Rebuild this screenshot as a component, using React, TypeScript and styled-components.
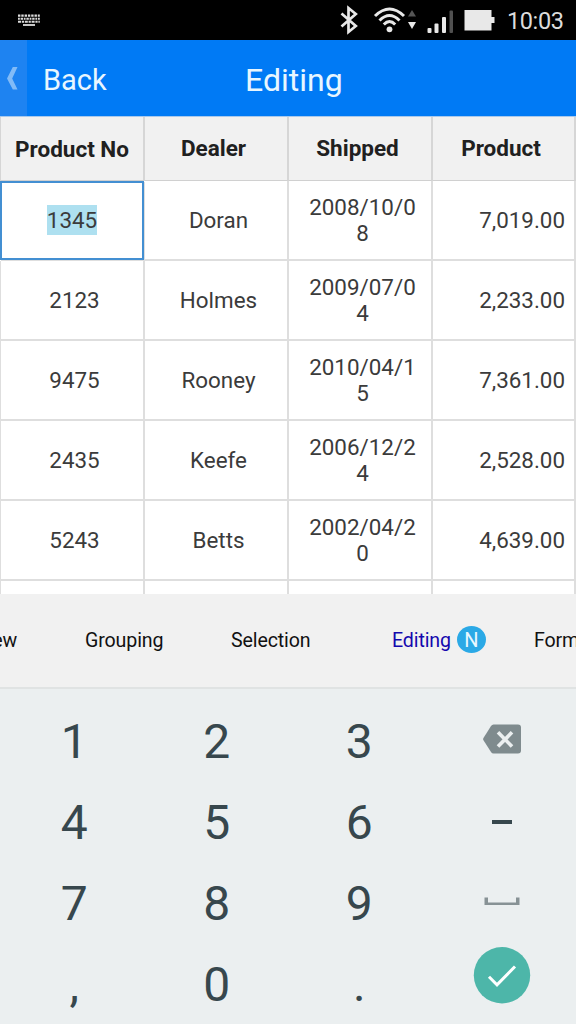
import React from "react";
import styled, { createGlobalStyle } from "styled-components";

const GlobalStyle = createGlobalStyle`
  * { box-sizing: border-box; }
  body { margin: 0; background: #ebeff0; font-family: Roboto, "Liberation Sans", sans-serif; }
`;

const Screen = styled.div`
  width: 576px;
  height: 1024px;
  overflow: hidden;
  display: flex;
  flex-direction: column;
`;

const StatusBar = styled.div`
  height: 40px;
  flex: none;
  background: #000;
  display: flex;
  align-items: center;
  padding: 0 13px 0 18px;
`;

const StatusIcons = styled.div`
  margin-left: auto;
  display: flex;
  height: 40px;
`;

const Clock = styled.span`
  margin-left: 12px;
  font-size: 23.5px;
  line-height: 42px;
  color: #dcdcdc;
  letter-spacing: -0.4px;
  width: 56px;
  white-space: nowrap;
`;

const NavBar = styled.header`
  height: 77px;
  flex: none;
  background: #007af5;
  color: #fff;
  display: grid;
  grid-template-columns: 27px 200px 1fr;
  border-bottom: 1px solid #a9c9ec;
`;

const BackEdge = styled.div`
  background: #1e83f1;
  display: flex;
`;

const BackLabel = styled.span`
  padding-left: 16px;
  font-size: 29px;
  line-height: 80px;
  height: 76px;
  color: #e8f6ff;
`;

const Title = styled.h1`
  margin: 0;
  padding-left: 18px;
  font-size: 32px;
  font-weight: 400;
  line-height: 81px;
  height: 76px;
  color: #e8f6ff;
`;

const Grid = styled.div`
  height: 477px;
  flex: none;
  overflow: hidden;
  display: grid;
  grid-template-columns: 145px 144px 144px 143px;
  grid-template-rows: 64px;
  grid-auto-rows: 80px;
  background: #fff;
`;

const HeaderCell = styled.div<{ $first?: boolean }>`
  background: #f1f1f1;
  border-right: 2px solid #d6d6d6;
  border-bottom: 1px solid #d0d0d0;
  border-left: ${(p) => (p.$first ? "1px solid #d6d6d6" : "0")};
  display: flex;
  justify-content: center;
  font-size: 22.5px;
  font-weight: 700;
  line-height: ${(p) => (p.$first ? 65 : 63)}px;
  color: #202020;
  padding-right: ${(p) => (p.$first ? 0 : 5)}px;
`;

const Cell = styled.div<{ $align?: "right"; $first?: boolean; $active?: boolean }>`
  border-right: 2px solid #dedede;
  border-bottom: 2px solid #dedede;
  border-left: ${(p) => (p.$first ? "1px solid #dedede" : "0")};
  display: flex;
  align-items: center;
  justify-content: ${(p) => (p.$align ? "flex-end" : "center")};
  text-align: center;
  font-size: 22.4px;
  line-height: 26px;
  color: #3b3b3b;
  padding: 0 ${(p) => (p.$align ? 9 : 0)}px 0 ${(p) => (p.$align ? 0 : 5)}px;
  ${(p) =>
    p.$active &&
    `border: 2px solid #438fd2;
     margin: 0 1px 1px 0;
     padding: 0 0 1px;
     box-shadow: 1px 1px 0 #dedede;`}
`;

const DateText = styled.span`
  width: 110px;
  word-break: break-all;
`;

const Selected = styled.span`
  background: #aee0f0;
  line-height: 30px;
`;

const TabBar = styled.nav`
  height: 95px;
  flex: none;
  background: #f1f1f1;
  border-bottom: 2px solid #e0e3e3;
  display: flex;
  overflow: hidden;
  white-space: nowrap;
  font-size: 19.6px;
  letter-spacing: -0.12px;
  line-height: 93px;
`;

const Tab = styled.span<{ $w: number; $active?: boolean }>`
  width: ${(p) => p.$w}px;
  flex: none;
  display: flex;
  align-items: center;
  height: 93px;
  color: ${(p) => (p.$active ? "#1408ae" : "#111")};
`;

const ClippedTab = styled(Tab)`
  justify-content: flex-end;
  padding-right: 68px;
`;

const Badge = styled.span`
  margin: 0 0 2px 6px;
  width: 29px;
  height: 27px;
  border-radius: 50%;
  background: #2ba9e6;
  color: #e9f8ff;
  font-size: 20px;
  line-height: 28px;
  text-align: center;
`;

const Keypad = styled.div`
  flex: 1;
  min-height: 0;
  background: #ebeff0;
  display: grid;
  grid-template-columns: repeat(4, 142.5px);
  grid-auto-rows: 81px;
  padding: 12px 0 0 3px;
`;

const Key = styled.div`
  text-align: center;
  font-size: 48px;
  line-height: 82px;
  color: #37474d;
`;

const IconKey = styled(Key)`
  display: flex;
  justify-content: center;
`;

const rows = [
  ["1345", "Doran", "2008/10/08", "7,019.00"],
  ["2123", "Holmes", "2009/07/04", "2,233.00"],
  ["9475", "Rooney", "2010/04/15", "7,361.00"],
  ["2435", "Keefe", "2006/12/24", "2,528.00"],
  ["5243", "Betts", "2002/04/20", "4,639.00"],
  ["", "", "", ""],
];

const KeyboardIcon = () => (
  <svg width="24" height="14" viewBox="0 0 24 14" stroke="#ddd" fill="none">
    <path d="M0 2.7H21.800" strokeWidth="2.200" strokeDasharray="2.4 0.9" />
    <path d="M0 5.700H21.800" strokeWidth="2" strokeDasharray="1.8 0.8 2.4 0.8" />
    <path d="M0 8.700H21.800" strokeWidth="2" strokeDasharray="3 0.8 2.2 0.8" />
    <path d="M5 12H17" strokeWidth="1.800" />
  </svg>
);

const SignalIcons = () => (
  <svg width="156" height="40" viewBox="338 0 156 40">
    <path d="M340.5 13.5L354.8 26L347.5 32V8L354.8 14L340.5 26.5" fill="none" stroke="#e8e8e8" strokeWidth="2.7" />
    <g fill="none" stroke="#e8e8e8" strokeWidth="3">
      <path d="M374 16Q388.500 2 403 16" />
      <path d="M378.500 20.500Q388.500 10.500 398.500 20.500" />
      <path d="M382.800 24.500Q388.500 18.500 394.200 24.500" />
    </g>
    <circle cx="388.500" cy="29.300" r="2.900" fill="#e8e8e8" />
    <path d="M407 16.500L411 10L415 16.500Z" fill="#555" />
    <path d="M407 22L411 29L415 22Z" fill="#e8e8e8" />
    <g fill="#e8e8e8">
      <rect x="426.500" y="28" width="4" height="5" rx="1" />
      <rect x="433.500" y="23.500" width="4" height="9.500" rx="1" />
      <rect x="441" y="17" width="4" height="16" rx="1" />
      <rect x="463.500" y="10" width="27" height="20.500" />
      <rect x="490" y="17" width="3.500" height="6" />
    </g>
    <rect x="448.500" y="10.500" width="3.500" height="22.500" rx="1" fill="#505050" />
  </svg>
);

const Chevron = () => (
  <svg width="27" height="76" viewBox="0 0 27 76">
    <path d="M12.800 27H17.500L12.200 38.500L17.500 49.500H12.800L7 38.500Z" fill="#82bbf7" />
  </svg>
);

const Backspace = () => (
  <svg width="40" height="77" viewBox="0 0 40 77">
    <path d="M11.500 23.500H36Q39 23.500 39 26.500V49.500Q39 52.500 36 52.500H11.500Q10 52.500 9 51L1.300 39Q1 38.300 1.300 37.300L9 25Q10 23.500 11.500 23.500Z" fill="#7f8b8e" />
    <path d="M16 31.300L30 45.500M30 31.300L16 45.500" stroke="#ebeff0" strokeWidth="3.600" />
  </svg>
);

const Minus = () => (
  <svg width="20" height="81" viewBox="0 0 20 81">
    <rect y="38" width="20" height="4" fill="#37474d" />
  </svg>
);

const Space = () => (
  <svg width="36" height="81" viewBox="0 0 36 81">
    <path d="M0.500 34.500H4V39.500H32V34.500H35.500V42H0.500Z" fill="#879295" />
  </svg>
);

const Check = () => (
  <svg width="58" height="81" viewBox="0 0 58 81">
    <circle cx="29" cy="31.300" r="28.200" fill="#4db6a9" />
    <path d="M16 32.800L24 40.800L42 22.500" fill="none" stroke="#fff" strokeWidth="3" />
  </svg>
);

export default function App() {
  return (
    <Screen>
      <GlobalStyle />
      <StatusBar>
        <KeyboardIcon />
        <StatusIcons>
          <SignalIcons />
          <Clock>10:03</Clock>
        </StatusIcons>
      </StatusBar>
      <NavBar>
        <BackEdge><Chevron /></BackEdge>
        <BackLabel>Back</BackLabel>
        <Title>Editing</Title>
      </NavBar>
      <Grid>
        {["Product No", "Dealer", "Shipped", "Product"].map((label, i) => (
          <HeaderCell key={label} $first={i === 0}>{label}</HeaderCell>
        ))}
        {rows.map(([no, dealer, shipped, product], i) => (
          <React.Fragment key={i}>
            <Cell $first $active={i === 0}>{i === 0 ? <Selected>{no}</Selected> : no}</Cell>
            <Cell>{dealer}</Cell>
            <Cell><DateText>{shipped}</DateText></Cell>
            <Cell $align="right">{product}</Cell>
          </React.Fragment>
        ))}
      </Grid>
      <TabBar>
        <ClippedTab $w={85}>View</ClippedTab>
        <Tab $w={146}>Grouping</Tab>
        <Tab $w={161}>Selection</Tab>
        <Tab $w={142} $active>Editing<Badge>N</Badge></Tab>
        <Tab $w={100}>Form</Tab>
      </TabBar>
      <Keypad>
        <Key>1</Key><Key>2</Key><Key>3</Key><IconKey><Backspace /></IconKey>
        <Key>4</Key><Key>5</Key><Key>6</Key><IconKey><Minus /></IconKey>
        <Key>7</Key><Key>8</Key><Key>9</Key><IconKey><Space /></IconKey>
        <Key>,</Key><Key>0</Key><Key>.</Key><IconKey><Check /></IconKey>
      </Keypad>
    </Screen>
  );
}
